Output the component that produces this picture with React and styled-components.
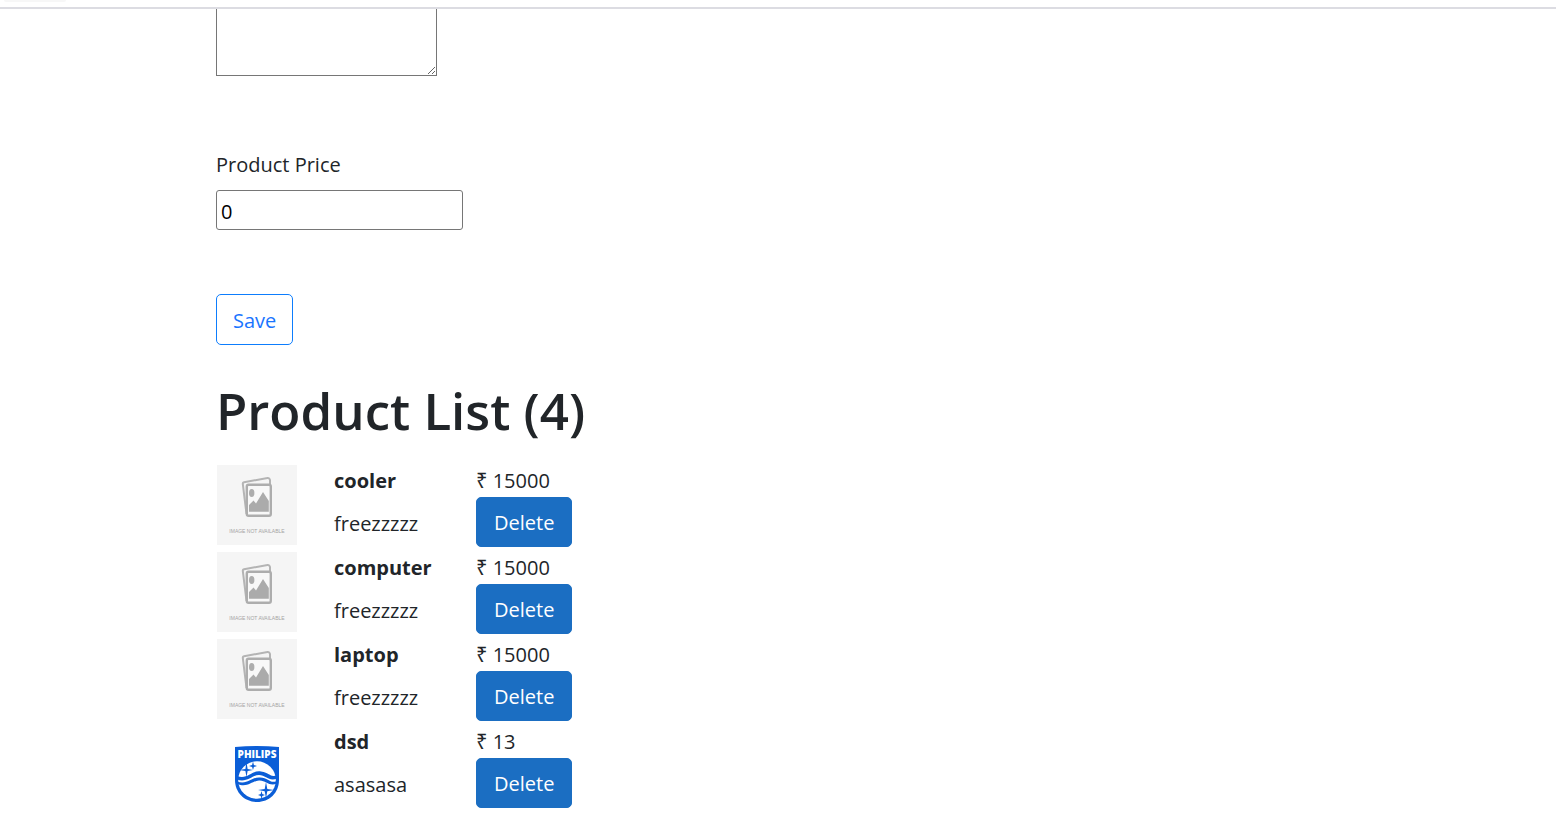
import React, { useState } from "react";
import styled, { createGlobalStyle } from "styled-components";

const GlobalStyle = createGlobalStyle`
  *, *::before, *::after { box-sizing: border-box; }
  body {
    margin: 0;
    background: #fff;
    color: #212529;
    font-family: "Segoe UI", "Open Sans", "Noto Sans", sans-serif;
    font-size: 20px;
    line-height: 32px;
  }
`;

const TopBar = styled.header`
  height: 9px;
  padding: 0 4px;
  border-bottom: 2px solid #dcdce2;
`;

const TabEdge = styled.div`
  width: 62px;
  height: 2px;
  background: #f7f7f7;
  border-radius: 0 0 6px 6px;
`;

const Page = styled.main`
  max-width: 1124px;
  margin: 0 auto;
`;

const Form = styled.form`
  display: flex;
  flex-direction: column;
  align-items: flex-start;
`;

const Description = styled.textarea`
  width: 221px;
  height: 67px;
  margin-bottom: 73px;
  border: 1px solid #767676;
  border-top: 0;
  border-radius: 0;
  background: #fff;
  font: inherit;
  resize: both;
`;

const Label = styled.label`
  margin-bottom: 9px;
`;

const PriceInput = styled.input`
  width: 247px;
  height: 40px;
  margin-bottom: 64px;
  padding: 2px 4px 0;
  border: 1px solid #767676;
  border-radius: 3px;
  color: #000;
  font: inherit;
`;

const Button = styled.button`
  display: block;
  height: ${(p) => (p.$outline ? 51 : 50)}px;
  padding: 2px ${(p) => (p.$outline ? 16 : 17)}px 0;
  border: 1px solid ${(p) => (p.$outline ? "#0d7dfd" : "#1b6ec2")};
  border-radius: 5px;
  background: ${(p) => (p.$outline ? "#fff" : "#1b6ec2")};
  color: ${(p) => (p.$outline ? "#1a75ff" : "#fff")};
  font: inherit;
  cursor: pointer;
`;

const Heading = styled.h1`
  margin: 32px 0 21px;
  font-size: 51px;
  font-weight: 600;
  line-height: 67px;
`;

const Table = styled.table`
  border-collapse: collapse;
`;

const Row = styled.tr`
  height: 87px;
  vertical-align: top;
`;

const Cell = styled.td`
  width: ${(p) => p.$width}px;
  padding: 0;
`;

const Picture = styled.svg`
  display: block;
  width: 80px;
  height: 80px;
  margin-left: 1px;
`;

const Name = styled.strong`
  display: block;
  margin-bottom: 11px;
`;

function Placeholder() {
  return (
    <Picture viewBox="0 0 80 80" role="img" aria-label="Image not available">
      <rect width="80" height="80" fill="#f5f5f5" />
      <path d="M29.5 49 25.8 18.8Q25.700 17.5 27 17.2L50.5 13Q52.5 12.700 53 15V19" fill="none" stroke="#b4b4b4" strokeWidth="2" />
      <rect x="29.800" y="19.800" width="24" height="31" rx="1.800" fill="#f8f8f8" stroke="#adadad" strokeWidth="2.400" />
      <ellipse cx="34.700" cy="28" rx="2.700" ry="4" fill="#adadad" />
      <path d="M32 46.800V40L36.500 35.500 39 38.500 46 27 51.800 36V46.800Z" fill="#ababab" />
      <text x="40" y="68" textAnchor="middle" fontFamily="Liberation Sans, sans-serif" fontSize="5" fill="#a4a4a4">
        IMAGE NOT AVAILABLE
      </text>
    </Picture>
  );
}

function Philips() {
  return (
    <Picture viewBox="0 0 80 80" role="img" aria-label="Philips">
      <path d="M18 21Q40 19 62 21V54C62 67 52 76 40 76S18 67 18 54Z" fill="#0b5ed7" />
      <text x="40" y="32" textAnchor="middle" fontFamily="Open Sans, sans-serif" fontSize="10" fontWeight="800" fill="#fff">
        PHILIPS
      </text>
      <circle cx="40" cy="54" r="18.8" fill="#fff" />
      <path d="M20 50C31 54 34 44 44 45.500S53 52 60 49V52.500C52 56 49 49 42 49S30 57 20 53.500Z" fill="#0b5ed7" />
      <path d="M20 55.500C31 59 34 51 43 51.500S53 58 60 55V57.500C52 61 49 54 42 54.500S31 62 20 58Z" fill="#0b5ed7" />
      <g fill="#0b5ed7">
        <path d="M29.500 36 30.600 43 36 44 30.600 45 29.500 51 28.400 45 22 44 28.400 43Z" />
        <path d="M36 35.500 36.900 39 40 40 36.900 41 36 44 35.100 41 32 40 35.100 39Z" />
        <path d="M49 56 50.300 63 57 64 50.300 65.200 49 72 47.700 65.200 41 64 47.700 63Z" />
        <path d="M44.500 65 45.300 68 48 69 45.300 70 44.500 73 43.700 70 41 69 43.700 68Z" />
      </g>
    </Picture>
  );
}

const initialProducts = [
  { id: 1, name: "cooler", detail: "freezzzzz", price: 15000 },
  { id: 2, name: "computer", detail: "freezzzzz", price: 15000 },
  { id: 3, name: "laptop", detail: "freezzzzz", price: 15000 },
  { id: 4, name: "dsd", detail: "asasasa", price: 13, Image: Philips },
];

export default function App() {
  const [products, setProducts] = useState(initialProducts);
  const [price, setPrice] = useState("0");
  const remove = (id) => setProducts(products.filter((p) => p.id !== id));

  return (
    <>
      <GlobalStyle />
      <TopBar>
        <TabEdge />
      </TopBar>
      <Page>
        <Form onSubmit={(e) => e.preventDefault()}>
          <Description aria-label="Product Description" />
          <Label htmlFor="price">Product Price</Label>
          <PriceInput id="price" inputMode="numeric" value={price} onChange={(e) => setPrice(e.target.value)} />
          <Button $outline type="submit">Save</Button>
        </Form>
        <Heading>Product List ({products.length})</Heading>
        <Table>
          <tbody>
            {products.map(({ id, name, detail, price: cost, Image = Placeholder }) => (
              <Row key={id}>
                <Cell $width={118}><Image /></Cell>
                <Cell $width={142}>
                  <Name>{name}</Name>
                  {detail}
                </Cell>
                <Cell>
                  ₹ {cost}
                  <Button type="button" onClick={() => remove(id)}>Delete</Button>
                </Cell>
              </Row>
            ))}
          </tbody>
        </Table>
      </Page>
    </>
  );
}
